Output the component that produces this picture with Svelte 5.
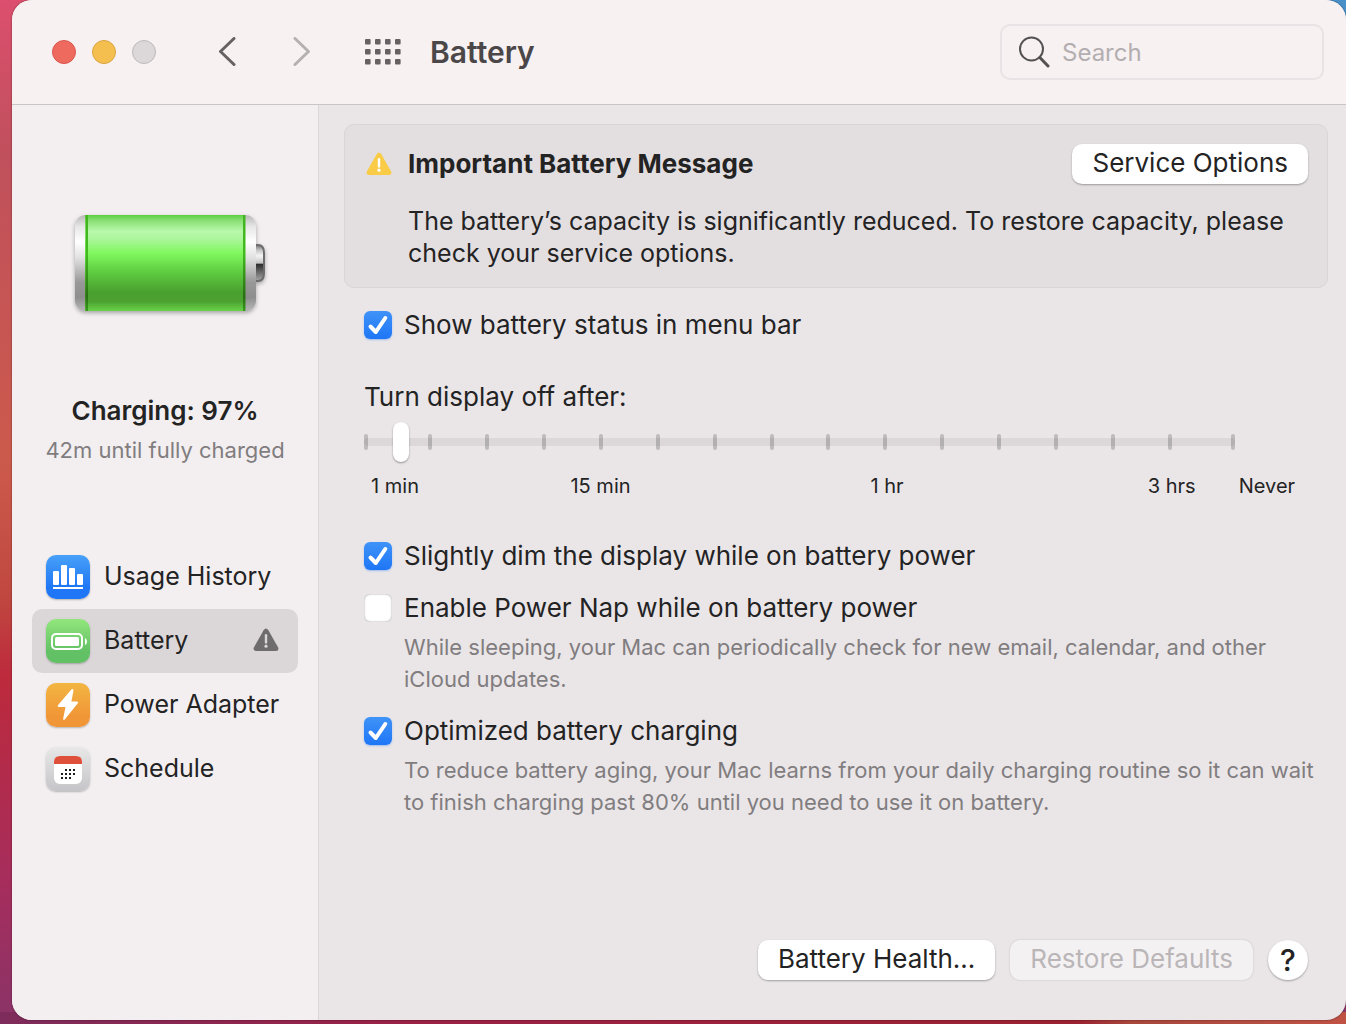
<script lang="ts">
	type Check = { id: string; label: string; note?: string; on: boolean };

	const sections = ['Usage History', 'Battery', 'Power Adapter', 'Schedule'];
	const innerTicks = Array.from({ length: 14 }, (_, index) => index);
	const dots = [
		[17, 24], [21, 24], [25, 24],
		[13, 28], [17, 28], [21, 28], [25, 28],
		[13, 32], [17, 32], [21, 32]
	];

	let selected = $state('Battery');
	let query = $state('');
	let minutes = $state(5);
	let statusItem = $state<Check>({ id: 'status', label: 'Show battery status in menu bar', on: true });
	let options = $state<Check[]>([
		{ id: 'dim', label: 'Slightly dim the display while on battery power', on: true },
		{
			id: 'nap',
			label: 'Enable Power Nap while on battery power',
			note: 'While sleeping, your Mac can periodically check for new email, calendar, and other iCloud updates.',
			on: false
		},
		{
			id: 'optimized',
			label: 'Optimized battery charging',
			note: 'To reduce battery aging, your Mac learns from your daily charging routine so it can wait to finish charging past 80% until you need to use it on battery.',
			on: true
		}
	]);
</script>

{#snippet check(item: Check)}
	<div class="check">
		<span class="box">
			<input type="checkbox" id={item.id} bind:checked={item.on} />
			<svg viewBox="0 0 28 28" aria-hidden="true"><path d="M6.500 15.500 11.800 21 21.300 7" /></svg>
		</span>
		<label for={item.id}>{item.label}</label>
		{#if item.note}
			<p>{item.note}</p>
		{/if}
	</div>
{/snippet}

{#snippet warning()}
	<svg class="warning" viewBox="0 0 26 24" aria-hidden="true">
		<path class="triangle" d="M10.6 2.2Q13-1.2 15.4 2.2L25 19.2Q26.6 23 22.8 23H3.2Q-.6 23 1 19.2Z" />
		<path class="mark" d="M13 7.2V14.4" />
		<circle cx="13" cy="18.2" r="1.6" />
	</svg>
{/snippet}

<div class="window">
	<header>
		<div class="lights">
			<button class="light close" aria-label="Close"></button>
			<button class="light minimize" aria-label="Minimize"></button>
			<button class="light zoom" aria-label="Zoom" disabled></button>
		</div>
		<div class="nav">
			<button aria-label="Back">
				<svg width="18" height="30" viewBox="0 0 18 30"><path d="M16 1.500 2.500 14.500 16 27.500" /></svg>
			</button>
			<button aria-label="Forward" disabled>
				<svg width="18" height="30" viewBox="0 0 18 30"><path d="M2 1.500 15.500 14.500 2 27.500" /></svg>
			</button>
		</div>
		<button class="all" aria-label="Show all">
			<svg width="36" height="26" viewBox="0 0 36 26">
				{#each [0, 10, 20] as y}
					{#each [0, 10, 20, 30] as x}
						<rect {x} {y} width="5.600" height="5.400" rx="1" />
					{/each}
				{/each}
			</svg>
		</button>
		<h1>Battery</h1>
		<div class="search">
			<svg width="32" height="32" viewBox="0 0 32 32" aria-hidden="true">
				<circle cx="13.500" cy="13" r="11.500" />
				<path class="handle" d="M21.800 21.500 30 30" />
			</svg>
			<input type="text" placeholder="Search" aria-label="Search" bind:value={query} />
		</div>
	</header>

	<div class="body">
		<aside>
			<svg class="cell" width="200" height="112" viewBox="0 0 200 112" aria-hidden="true">
				<defs>
					<linearGradient id="cap" x1="0" y1="0" x2="0" y2="1">
						<stop offset="0" stop-color="#b8b8b8" />
						<stop offset=".12" stop-color="#e6e6e6" />
						<stop offset=".28" stop-color="#ffffff" />
						<stop offset=".45" stop-color="#e0e0e0" />
						<stop offset=".7" stop-color="#989898" />
						<stop offset=".86" stop-color="#8e8e8e" />
						<stop offset="1" stop-color="#b8b8b8" />
					</linearGradient>
					<linearGradient id="charge" x1="0" y1="0" x2="0" y2="1">
						<stop offset="0" stop-color="#5bd03c" />
						<stop offset=".05" stop-color="#86dd70" />
						<stop offset=".17" stop-color="#b8f9ab" />
						<stop offset=".25" stop-color="#acf69c" />
						<stop offset=".4" stop-color="#7ff75d" />
						<stop offset=".6" stop-color="#5ecb40" />
						<stop offset=".8" stop-color="#4aa02f" />
						<stop offset=".9" stop-color="#4ca131" />
						<stop offset="1" stop-color="#69d349" />
					</linearGradient>
					<linearGradient id="edge" x1="0" y1="0" x2="0" y2="1">
						<stop offset="0" stop-color="#42b520" />
						<stop offset=".4" stop-color="#43ba20" />
						<stop offset=".85" stop-color="#286f12" />
						<stop offset="1" stop-color="#399b1d" />
					</linearGradient>
					<linearGradient id="tip" x1="0" y1="0" x2="0" y2="1">
						<stop offset="0" stop-color="#777777" />
						<stop offset=".15" stop-color="#c8c8c8" />
						<stop offset=".3" stop-color="#f4f4f4" />
						<stop offset=".5" stop-color="#c4c4c4" />
						<stop offset=".54" stop-color="#2e2e2e" />
						<stop offset=".7" stop-color="#5a5a5a" />
						<stop offset="1" stop-color="#a8a8a8" />
					</linearGradient>
				</defs>
				<path d="M180 31h3q6 0 6 8v20q0 8-6 8h-3z" fill="url(#tip)" stroke="#6c6c6c" stroke-width="2" />
				<rect x="0" y="1" width="181" height="96" rx="11" fill="url(#cap)" />
				<rect x="10" y="1" width="160" height="96" fill="url(#charge)" />
				<rect x="10.500" y="1" width="2.500" height="96" fill="url(#edge)" />
				<rect x="168" y="1" width="2.500" height="96" fill="url(#edge)" />
			</svg>
			<h2>Charging: 97%</h2>
			<p class="remaining">42m until fully charged</p>
			<nav>
				{#each sections as name, i}
					<button class="section" class:selected={selected === name} onclick={() => (selected = name)}>
						<span class="tile tile-{i}">
							<svg width="44" height="44" viewBox="0 0 44 44" aria-hidden="true">
								{#if i === 0}
									<rect x="7" y="16" width="6" height="14" rx="1" />
									<rect x="15" y="10" width="6" height="20" rx="1" />
									<rect x="23" y="13" width="6" height="17" rx="1" />
									<rect x="31" y="19" width="6" height="11" rx="1" />
									<rect x="7" y="32" width="30" height="2" />
								{:else if i === 1}
									<rect x="6" y="15" width="30" height="15" rx="4" fill="none" stroke="#fff" stroke-width="2" />
									<rect x="9" y="18" width="24" height="9" rx="1.6" />
									<path d="M39 19q2 1 2 3.500t-2 3.500z" />
								{:else if i === 2}
									<path d="M25.600 6.300Q27.800 5.400 27.400 8L25.400 18.600H30.600Q33 18.800 31.600 20.600L19 36.300Q17.300 38 17.200 35.400L19.500 24H12.800Q10.800 23.700 12.300 21.800Z" />
								{:else}
									<rect x="8" y="9" width="28" height="28" rx="6" />
									<path d="M8 17v-2q0-6 6-6h16q6 0 6 6v2z" fill="#df503a" />
									{#each dots as [x, y]}
										<rect x={x + 2} y={y - 2} width="2" height="2" fill="#1c1c1c" />
									{/each}
								{/if}
							</svg>
						</span>
						{name}
						{#if name === 'Battery'}
							{@render warning()}
						{/if}
					</button>
				{/each}
			</nav>
		</aside>

		<main>
			<section class="message">
				{@render warning()}
				<h3>Important Battery Message</h3>
				<button class="push">Service Options</button>
				<p>The battery’s capacity is significantly reduced. To restore capacity, please check your service options.</p>
			</section>

			<div class="settings">
				{@render check(statusItem)}

				<div class="display-off">
					<label for="display-off">Turn display off after:</label>
					<div class="slider">
						<div class="ticks" aria-hidden="true">
							<i></i>
							<div class="inner">
								{#each innerTicks as tick (tick)}
									<i></i>
								{/each}
							</div>
							<i></i>
						</div>
						<input id="display-off" type="range" min="0" max="145" bind:value={minutes} />
					</div>
					<div class="scale">
						<span>1 min</span>
						<span>15 min</span>
						<span>1 hr</span>
						<span></span>
						<span>3 hrs</span>
						<span>Never</span>
					</div>
				</div>

				{#each options as _, i}
					{@render check(options[i])}
				{/each}
			</div>

			<footer>
				<button class="push">Battery Health...</button>
				<button class="push" disabled>Restore Defaults</button>
				<button class="help" aria-label="Help">?</button>
			</footer>
		</main>
	</div>
</div>

<style>
	:global(body) {
		margin: 0;
		background:
			linear-gradient(to right, #7d2c5b, #9b2146 30%, #9b2130 80%, #a8473c 84%, #c05245) bottom / 100% 12px no-repeat,
			linear-gradient(#4a90c8, #4a90c8) top right / 40px 40px no-repeat,
			linear-gradient(#dc4f6e, #c0505c 15%, #cc5a4c 45%, #c04840 58%, #bd2a3c 66%, #a62d5c 86%, #8a3468);
	}

	.window {
		box-sizing: border-box;
		display: flex;
		flex-direction: column;
		min-height: calc(100vh - 4px);
		margin: 0 0 4px 12px;
		border-radius: 20px;
		overflow: hidden;
		background: #eae6e8;
		box-shadow: 0 0 2px #00000080;
		font-family: Inter, 'Liberation Sans', sans-serif;
		font-size: 26px;
		line-height: 32px;
		color: #242324;
	}

	h1,
	h2,
	h3,
	p {
		margin: 0;
	}

	button,
	input {
		margin: 0;
		padding: 0;
		border: 0;
		background: none;
		font: inherit;
		color: inherit;
	}

	svg {
		display: block;
	}

	header {
		display: flex;
		align-items: center;
		box-sizing: border-box;
		height: 105px;
		padding: 0 22px 0 40px;
		border-bottom: 1px solid #c9c4c6;
		background: #f7f1f2;
	}

	.lights {
		display: flex;
		gap: 16px;
	}

	.light {
		box-sizing: border-box;
		width: 24px;
		height: 24px;
		border: 1px solid #d9574e;
		border-radius: 50%;
		background: #ee6a5f;
	}

	.minimize {
		border-color: #dba440;
		background: #f5bf4f;
	}

	.zoom {
		border-color: #bdb8ba;
		background: #dcd8d9;
	}

	.nav {
		display: flex;
		gap: 57px;
		margin-left: 62px;
	}

	.nav svg {
		fill: none;
		stroke: #666163;
		stroke-width: 3;
		stroke-linecap: round;
		stroke-linejoin: round;
	}

	.nav button:disabled svg {
		stroke: #b5b0b2;
	}

	.all {
		margin-left: 54px;
		fill: #666163;
	}

	h1 {
		margin-left: 29px;
		font-size: 30px;
		font-weight: 600;
		color: #4b4749;
	}

	.search {
		display: flex;
		align-items: center;
		gap: 12px;
		box-sizing: border-box;
		width: 324px;
		height: 56px;
		margin-left: auto;
		padding: 0 16px;
		border: 2px solid #e9e3e5;
		border-radius: 10px;
	}

	.search svg {
		flex: none;
		fill: none;
		stroke: #545153;
		stroke-width: 2;
	}

	.search .handle {
		stroke-width: 3;
		stroke-linecap: round;
	}

	.search input {
		min-width: 0;
		flex: 1;
		padding-top: 2px;
		outline: 0;
		font-size: 24px;
	}

	.search input::placeholder {
		color: #b3aeb0;
		opacity: 1;
	}

	.body {
		display: flex;
		flex: 1;
	}

	aside {
		box-sizing: border-box;
		flex: none;
		width: 307px;
		padding: 109px 20px 0;
		border-right: 1px solid #dcd8da;
		background: #f3eff0;
		text-align: center;
	}

	.cell {
		margin-left: 43px;
		filter: drop-shadow(0 2px 2px #00000050);
	}

	h2 {
		margin-top: 69px;
		font-size: 26px;
		font-weight: 600;
	}

	.remaining {
		margin-top: 7px;
		font-size: 22px;
		color: #817d7f;
		white-space: nowrap;
	}

	nav {
		margin-top: 79px;
	}

	.section {
		display: flex;
		align-items: center;
		gap: 14px;
		box-sizing: border-box;
		width: 100%;
		height: 64px;
		padding: 0 19px 2px 14px;
		border-radius: 10px;
		font-size: 25px;
		white-space: nowrap;
	}

	.selected {
		background: #dbd7d8;
	}

	.section .warning {
		margin-left: auto;
		color: #6f6c6d;
	}

	.section .warning .mark {
		stroke: #dbd7d8;
	}

	.section .warning circle {
		fill: #dbd7d8;
	}

	.tile {
		flex: none;
		margin-top: 2px;
		border-radius: 10px;
		box-shadow: 0 1px 2px #00000040;
		fill: #fff;
	}

	.tile-0 {
		background: linear-gradient(#47a1f8, #1f76f6 75%);
	}

	.tile-1 {
		background: linear-gradient(#92e67c, #62c065 75%);
	}

	.tile-2 {
		background: linear-gradient(#f2b642, #f19637 75%);
	}

	.tile-3 {
		background: linear-gradient(#e8e8e8, #c5c4c8);
	}

	.warning {
		width: 26px;
		height: 24px;
		color: #f9cb47;
	}

	.triangle {
		fill: currentColor;
	}

	.mark {
		stroke: #fff;
		stroke-width: 2.4;
		stroke-linecap: round;
	}

	.warning circle {
		fill: #fff;
	}

	main {
		display: flex;
		flex: 1;
		flex-direction: column;
		min-width: 0;
		padding: 19px 18px 40px 25px;
	}

	.message {
		display: grid;
		grid-template-columns: 26px 1fr auto;
		align-items: center;
		column-gap: 16px;
		row-gap: 21px;
		padding: 19px 19px 18px 21px;
		border: 1px solid #d9d5d7;
		border-radius: 10px;
		background: #e3dfe1;
	}

	.message p {
		grid-column: 2 / -1;
		font-size: 25px;
	}

	h3 {
		font-size: 26px;
		font-weight: 700;
	}

	.push {
		height: 40px;
		padding: 0 20px 2px;
		border-radius: 10px;
		background: #fff;
		box-shadow: 0 1px 2px #00000050;
		white-space: nowrap;
	}

	.push:disabled {
		background: #f4f1f3;
		box-shadow: 0 0 2px #00000030;
		color: #bab6b8;
	}

	.settings {
		padding: 21px 0 0 20px;
	}

	.check {
		display: grid;
		grid-template-columns: 28px 1fr;
		column-gap: 12px;
		align-items: center;
		margin-bottom: 20px;
	}

	.check p {
		grid-column: 2;
		margin-top: 7px;
		font-size: 22px;
		color: #817d7f;
	}

	.box {
		display: grid;
	}

	.box input,
	.box svg {
		grid-area: 1 / 1;
		width: 28px;
		height: 28px;
	}

	.box input {
		appearance: none;
		border-radius: 6px;
		background: #fff;
		box-shadow: inset 0 0 2px #00000070;
	}

	.box input:checked {
		background: linear-gradient(#3f93f8, #1f76f6);
		box-shadow: 0 1px 2px #1f76f660;
	}

	.box svg {
		visibility: hidden;
		pointer-events: none;
		fill: none;
		stroke: #fff;
		stroke-width: 4;
		stroke-linecap: round;
		stroke-linejoin: round;
	}

	.box input:checked + svg {
		visibility: visible;
	}

	.display-off {
		margin: 40px 14px 38px 0;
	}

	.display-off label {
		display: block;
	}

	.slider {
		display: grid;
		align-items: center;
		height: 42px;
		margin: 8px 79px 0 0;
	}

	.slider > * {
		grid-area: 1 / 1;
	}

	.ticks,
	.inner {
		display: flex;
		justify-content: space-between;
	}

	.inner {
		flex: 1;
		padding: 0 59px 0 60px;
	}

	.ticks i {
		z-index: 1;
		width: 4px;
		height: 16px;
		border-radius: 2px;
		background: #bfbbbd;
	}

	.slider input {
		z-index: 2;
		width: 100%;
		height: 42px;
		appearance: none;
	}

	.slider input::-webkit-slider-runnable-track {
		height: 8px;
		border-radius: 4px;
		background: #0000000f;
	}

	.slider input::-webkit-slider-thumb {
		appearance: none;
		width: 16px;
		height: 40px;
		margin-top: -16px;
		border-radius: 8px;
		background: #fff;
		box-shadow: 0 1px 2px #00000060;
	}

	.scale {
		display: grid;
		grid-template-columns: 62fr 348fr 224fr 124fr 96fr 94fr;
		margin-top: 7px;
		font-size: 20px;
		text-align: center;
		white-space: nowrap;
	}

	footer {
		display: flex;
		justify-content: flex-end;
		gap: 15px;
		margin-top: auto;
		padding-right: 20px;
	}

	.help {
		width: 40px;
		height: 40px;
		border-radius: 50%;
		background: #fff;
		box-shadow: 0 1px 2px #00000050;
		font-size: 30px;
		font-weight: 500;
	}
</style>
